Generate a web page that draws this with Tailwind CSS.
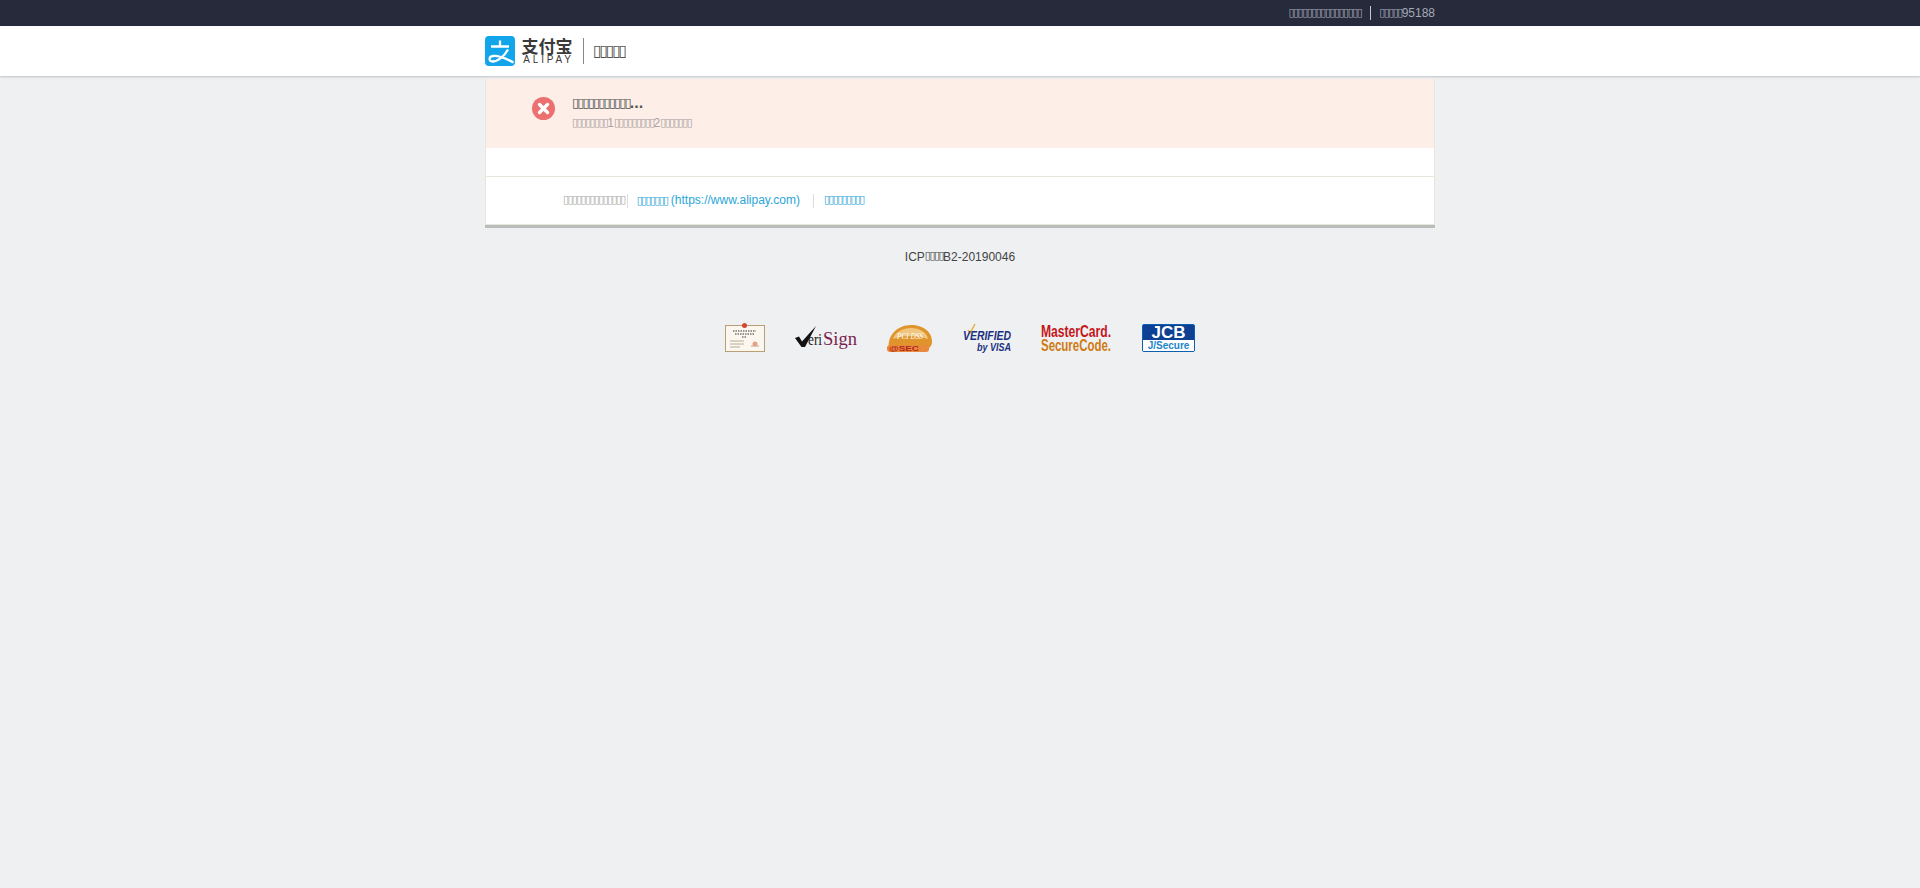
<!DOCTYPE html>
<html lang="zh-CN"><head><meta charset="utf-8"><title>支付宝</title>
<script src="https://cdn.jsdelivr.net/npm/@tailwindcss/browser@4"></script></head>
<body class="bg-[#eef0f2] font-['Liberation_Sans',sans-serif] text-xs text-[#333] min-h-[888px]">
<div class="h-[26px] bg-[#262a3b]">
  <div class="w-[950px] mx-auto h-full flex items-center justify-end text-[#a5a8b5]">
    <span class="font-['DejaVu_Sans',sans-serif] text-[11px] tracking-[-1.5px]">▯▯▯▯▯▯▯▯▯▯▯▯▯▯▯▯</span>
    <span class="ml-[9px] mr-[8px] h-3.5 w-px bg-[#c5c7d0]"></span>
    <span class="font-['DejaVu_Sans',sans-serif] text-[11px] tracking-[-1.6px]">▯▯▯▯▯</span><span>95188</span>
  </div>
</div>
<div class="h-[50px] bg-white shadow-[0_1px_2px_rgba(0,0,0,0.2)] relative">
  <div class="w-[950px] mx-auto h-full flex items-center">
    <svg width="30" height="30" viewBox="0 0 30 30" class="shrink-0"><rect width="30" height="30" rx="4" fill="#12a5ea"/><path d="M6 10.500h18M15 4.500v6M23 13.500C19 21 12 25.500 7.500 25.500C3.500 25.500 3.500 20.500 8 20C13 19.500 20 22 28.500 26.500" stroke="#fff" stroke-width="2.300" fill="none"/></svg>
    <div class="ml-[6px] w-[52px] flex flex-col items-center leading-none">
      <span class="font-['Noto_Sans_CJK_SC',sans-serif] font-bold text-[17px] leading-[18px] text-[#3a3a3a]">支付宝</span>
      <span class="text-[10px] tracking-[2.8px] text-[#3a3a3a] -mr-[3px]">ALIPAY</span>
    </div>
    <span class="ml-[10px] mr-[9px] h-[26px] w-px bg-[#888]"></span>
    <span class="font-['DejaVu_Sans',sans-serif] text-[16px] tracking-[-2.4px] text-[#555]">▯▯▯▯▯</span>
  </div>
</div>
<main class="w-[950px] mx-auto mt-[3px] border-b-[3px] border-[#bbbcbc]">
  <div class="border-x border-b border-[#e6e6da]">
    <div class="h-[69px] bg-[#fdeee8] flex">
      <svg width="23" height="23" viewBox="0 0 23 23" class="ml-[46px] mt-[18px] shrink-0"><circle cx="11.500" cy="11.500" r="11.500" fill="#ec7070"/><path d="M7.500 7.500l8 8M15.500 7.500l-8 8" stroke="#fff" stroke-width="3.400" stroke-linecap="round"/></svg>
      <div class="ml-[17px] pt-[13px] flex flex-col">
        <div class="h-[22px] flex items-center text-[#555]"><span class="font-['DejaVu_Sans',sans-serif] text-[13px] tracking-[-1.9px]">▯▯▯▯▯▯▯▯▯▯▯</span><span class="text-[16px] font-bold">...</span></div>
        <div class="h-[16px] mt-px flex items-center text-[#aaa2a2]"><span class="font-['DejaVu_Sans',sans-serif] text-[11px] tracking-[-1.65px]">▯▯▯▯▯▯▯▯</span><span>1</span><span class="font-['DejaVu_Sans',sans-serif] text-[11px] tracking-[-1.65px]">▯▯▯▯▯▯▯▯▯</span><span>2</span><span class="font-['DejaVu_Sans',sans-serif] text-[11px] tracking-[-1.65px]">▯▯▯▯▯▯▯</span></div>
      </div>
    </div>
    <div class="h-[29px] bg-white border-b border-[#e6e6da]"></div>
    <div class="h-[47px] bg-white flex items-center pl-[77px]">
      <span class="font-['DejaVu_Sans',sans-serif] text-[11px] tracking-[-1.65px] text-[#aaa]">▯▯▯▯▯▯▯▯▯▯▯▯▯▯</span>
      <span class="ml-[2px] h-3.5 w-px bg-[#ddd]"></span>
      <a class="ml-[9px] text-[#2aa6d8]"><span class="font-['DejaVu_Sans',sans-serif] text-[11px] tracking-[-1.65px]">▯▯▯▯▯▯▯</span> (https://www.alipay.com)</a>
      <span class="ml-[13px] h-3.5 w-px bg-[#ddd]"></span>
      <a class="ml-[10px] font-['DejaVu_Sans',sans-serif] text-[11px] tracking-[-1.65px] text-[#2aa6d8]">▯▯▯▯▯▯▯▯▯</a>
    </div>
  </div>
</main>
<p class="mt-[21px] h-[15px] flex justify-center items-center text-[#444]"><span>ICP</span><span class="font-['DejaVu_Sans',sans-serif] text-[11px] tracking-[-1.5px]">▯▯▯▯</span><span>B2-20190046</span></p>
<div class="mt-[60px] flex justify-center items-start gap-[30px]">
  <svg width="40" height="29" viewBox="0 0 40 29" class="-mt-px">
    <rect x="0.500" y="2.500" width="39" height="26" fill="#fbf7ee" stroke="#b89f75"/><circle cx="19.500" cy="2.500" r="2.500" fill="#d6452f"/>
    <path d="M8 8h23M10 11h19M17 14h5" stroke="#333" stroke-width="1.200" stroke-dasharray="1.500 1"/><path d="M5 18h14M5 21h14M5 24h10M26 23h8" stroke="#a89c84" stroke-width="0.800"/><circle cx="30" cy="21" r="2.500" fill="#e3a08a"/>
  </svg>
  <svg width="62" height="28" viewBox="0 0 62 28" font-family="Liberation Serif" class="overflow-visible">
    <path d="M0 14l4-1.500 3 5L21 2 10 23H6.500z" fill="#111"/>
    <text x="13" y="21" font-size="17" fill="#222" textLength="14" lengthAdjust="spacingAndGlyphs">eri</text>
    <text x="28" y="21" font-size="19" fill="#7a1f4e" textLength="34" lengthAdjust="spacingAndGlyphs">Sign</text>
  </svg>
  <svg width="46" height="29" viewBox="0 0 46 29" class="overflow-visible">
    <path d="M2 24C0 12 10 1 24 1C36 1 46 8 45 19C44 24 40 26 36 25C24 25 10 24 2 24Z" fill="#e0942c"/><path d="M6 15C8 8 16 4 24 4C32 4 40 8 41 15C30 11 16 11 6 15Z" fill="#f0c680"/>
    <text x="10" y="15" font-size="9" font-style="italic" fill="#fff" font-family="Liberation Serif" textLength="26" lengthAdjust="spacingAndGlyphs">PCI DSS</text>
    <rect x="0" y="21" width="42" height="7" rx="3" fill="#e88a3a"/>
    <text x="2" y="27" font-size="8" font-weight="bold" fill="#b3261e" font-family="Liberation Sans" textLength="30" lengthAdjust="spacingAndGlyphs">@SEC</text>
  </svg>
  <svg width="48" height="29" viewBox="0 0 48 29" font-family="Liberation Sans" font-weight="bold" font-style="italic" class="overflow-visible">
    <path d="M5 6l2 3 5-9" stroke="#e8b23a" stroke-width="1.500" fill="none"/>
    <text x="0" y="16" font-size="13" fill="#1c3080" textLength="48" lengthAdjust="spacingAndGlyphs">VERIFIED</text>
    <text x="14" y="27" font-size="11" fill="#1c3080" textLength="34" lengthAdjust="spacingAndGlyphs">by VISA</text>
  </svg>
  <svg width="71" height="28" viewBox="0 0 71 28" font-family="Liberation Sans" font-weight="bold" class="overflow-visible">
    <text x="0" y="12.500" font-size="16" fill="#c4161c" textLength="70" lengthAdjust="spacingAndGlyphs">MasterCard.</text>
    <text x="0" y="26.500" font-size="17" fill="#d07a12" textLength="70" lengthAdjust="spacingAndGlyphs">SecureCode.</text>
  </svg>
  <div class="w-[53px] h-[28px] rounded-[2px] bg-[#0d3f93] border border-[#0d5fb3] flex flex-col items-center">
    <span class="h-[15px] text-[17px] leading-[15px] font-bold text-white">JCB</span>
    <span class="h-[11px] w-full bg-white text-center text-[10px] leading-[11px] font-bold text-[#1a84c9]">J/Secure</span>
  </div>
</div>
</body></html>
